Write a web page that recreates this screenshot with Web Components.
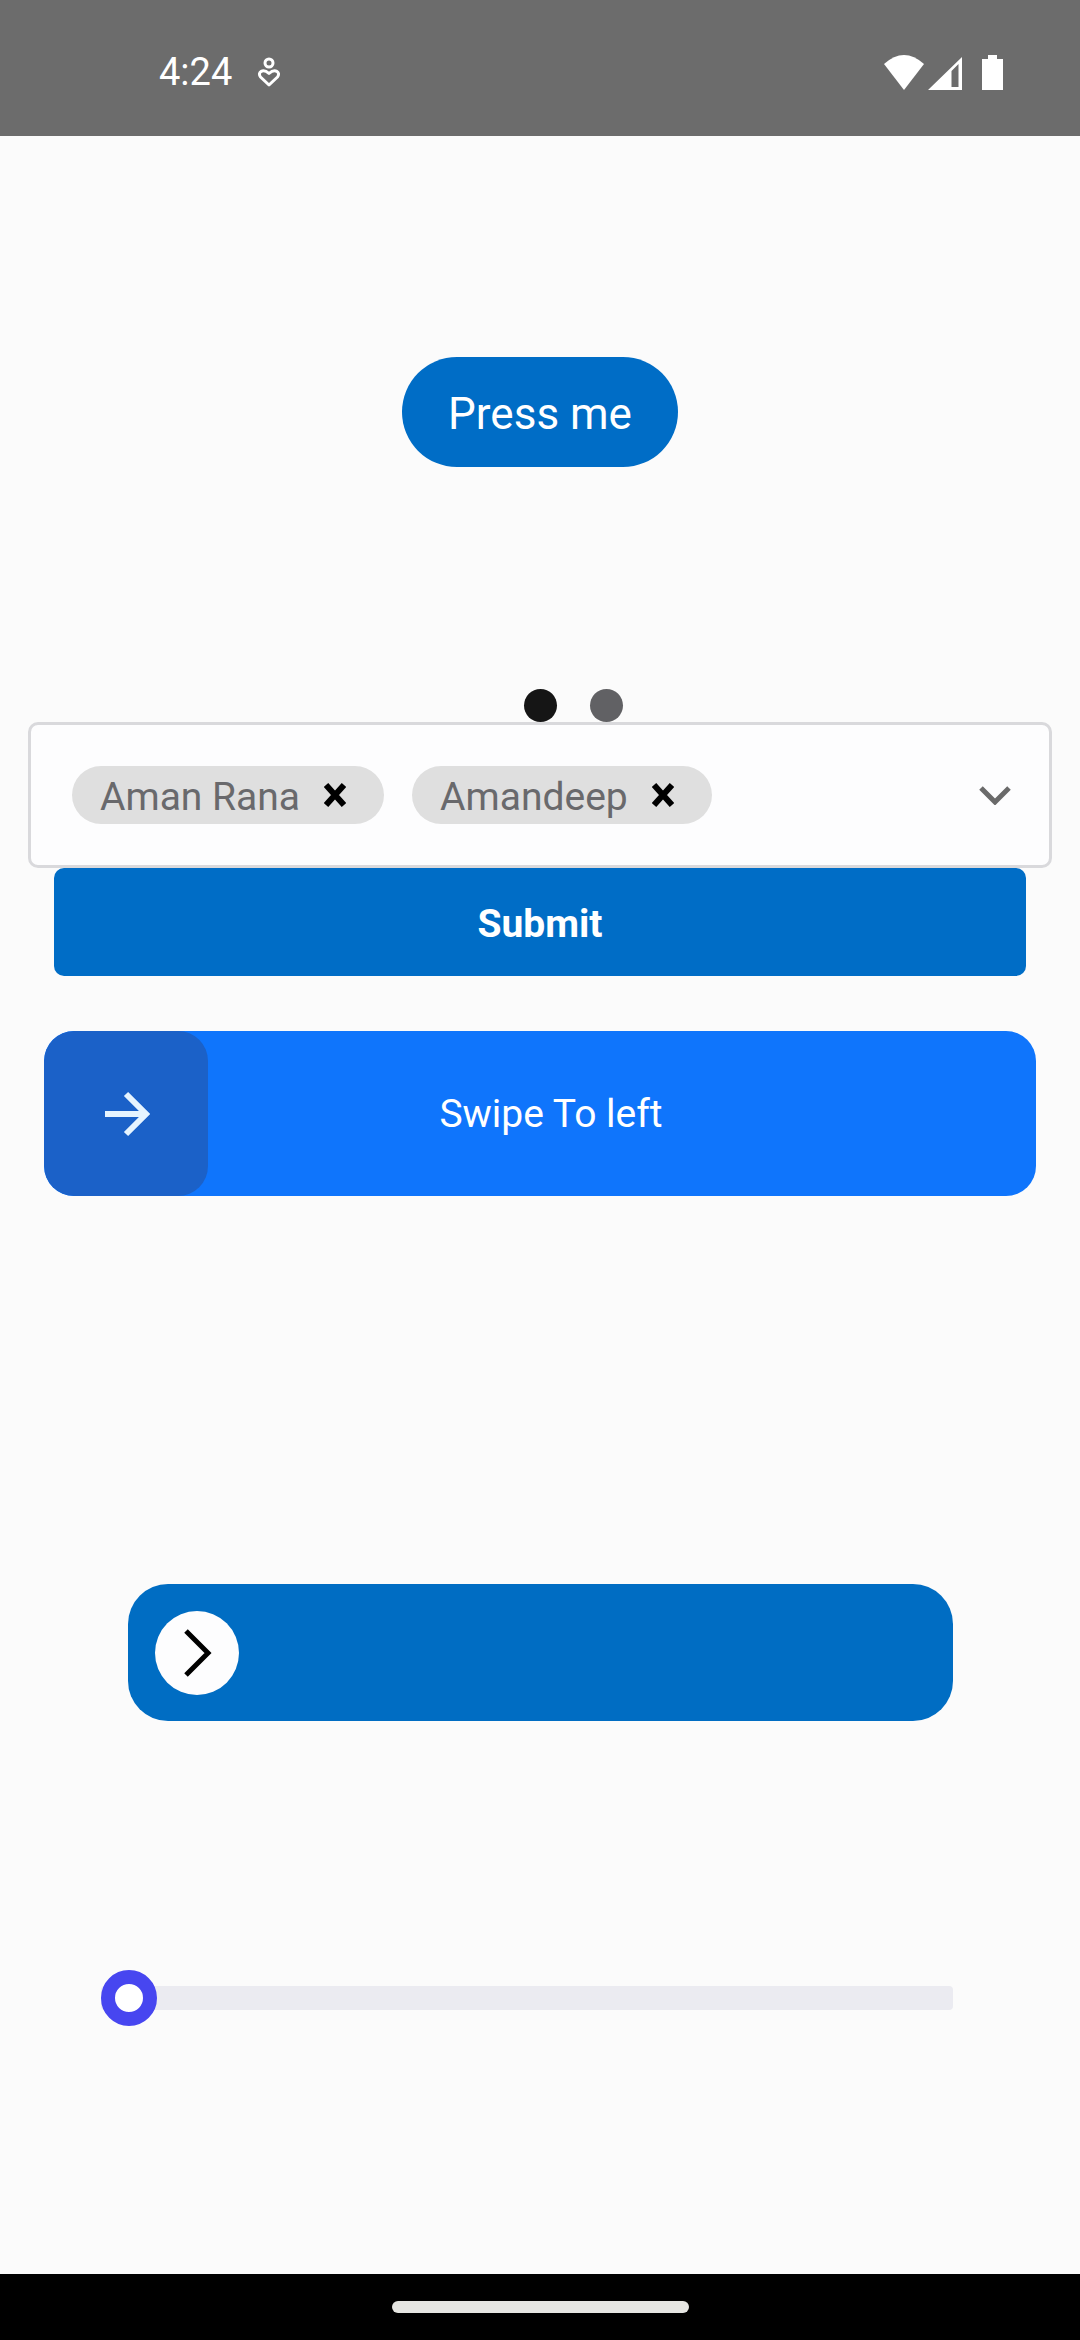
<!DOCTYPE html>
<html lang="en">
<head>
<meta charset="utf-8">
<meta name="viewport" content="width=device-width, initial-scale=1">
<title>Controls demo</title>
<style>
  html, body { margin: 0; }
  body { background: #fbfbfb; font-family: Roboto, "Noto Sans", sans-serif; }
</style>
</head>
<body>
<demo-app></demo-app>
<script>
function define(name, html) {
  customElements.define(name, class extends HTMLElement {
    constructor() {
      super();
      this.attachShadow({ mode: 'open' }).innerHTML =
        '<style>*{box-sizing:border-box}:host{display:block}svg{display:block;fill:none}button{font:inherit;border:0;margin:0;padding:0;cursor:pointer}</style>' + html;
    }
  });
}

define('status-bar', `
<style>
  :host { display: flex; align-items: center; justify-content: space-between; height: 136px; padding: 8px 76px 0 159px; background: #6c6c6c; color: #fff; }
  .side { display: flex; align-items: center; }
  .left { gap: 25px; }
  time { font-size: 38px; line-height: 44px; }
</style>
<div class="side left">
  <time>4:24</time>
  <svg width="24" height="30" viewBox="0 0 24 30" stroke="#fff" stroke-width="3" stroke-linejoin="round"><circle cx="12" cy="6" r="4"/><path d="M12 28 L3.500 20 C0 15 6 11 12 16.500 C18 11 24 15 20.500 20 Z"/></svg>
</div>
<div class="side">
  <svg width="120" height="38" viewBox="0 0 120 38">
    <path fill="#fff" d="M0 11 Q20 -7 40 11 L20 37 Z"/>
    <path fill="#fff" fill-rule="evenodd" d="M44 37 L78 4 V37 Z M67.500 34 H74.500 V11 L67.500 18 Z"/>
    <path fill="#fff" d="M98 6 h6 v-4 h9 v4 h6 v31 h-21 Z"/>
  </svg>
</div>`);

define('pill-button', `
<style>
  button { height: 110px; padding: 4px 46px 0; border-radius: 55px; background: #006dc6; color: #fff; font-size: 44px; line-height: 52px; }
</style>
<button type="button"><slot></slot></button>`);

define('page-dots', `
<style>
  :host { display: flex; gap: 33px; padding-left: calc(50% - 16px); }
  i { width: 33px; height: 33px; border-radius: 50%; background: #616164; }
  i:first-of-type { background: #151515; }
</style>
<i></i><i></i>`);

define('tag-chip', `
<style>
  :host { display: flex; align-items: center; gap: 24px; height: 58px; padding: 0 38px 0 28px; border-radius: 29px; background: #dfdfdf; color: #69696c; font-size: 39px; line-height: 44px; }
  span { padding-top: 4px; }
  button { display: block; background: none; }
</style>
<span><slot></slot></span>
<button type="button" aria-label="Remove"><svg width="22" height="24" viewBox="0 0 22 24" stroke="#000" stroke-width="6"><path d="M2 2 L20 22 M20 2 L2 22"/></svg></button>`);

define('multi-select', `
<style>
  :host { display: flex; align-items: center; justify-content: space-between; height: 146px; padding: 0 38px 0 41px; border: 3px solid #d9d9dc; border-radius: 10px; background: #fdfdfe; }
  .chips { display: flex; gap: 28px; }
  button { display: block; background: none; }
</style>
<div class="chips"><slot></slot></div>
<button type="button" aria-label="Show options"><svg width="32" height="20" viewBox="0 0 32 20" stroke="#6a6a6a" stroke-width="5"><path d="M2 3 L16 17 L30 3"/></svg></button>`);

define('submit-button', `
<style>
  button { width: 100%; height: 108px; padding-top: 4px; border-radius: 10px; background: #006dc6; color: #fff; font-size: 39px; line-height: 44px; font-weight: 700; }
</style>
<button type="submit"><slot></slot></button>`);

define('swipe-slider', `
<style>
  :host { display: grid; align-items: center; overflow: hidden; height: 165px; border-radius: 30px; background: #0f75fc; color: #fff; font-size: 39px; line-height: 44px; }
  input, label, svg { grid-area: 1 / 1; }
  label { padding-left: 22px; text-align: center; pointer-events: none; }
  svg { margin-left: 60px; pointer-events: none; }
  input { appearance: none; width: 100%; height: 165px; margin: 0; background: none; outline: 0; }
  input::-webkit-slider-thumb { appearance: none; width: 164px; height: 165px; border-radius: 30px; background: #1b61c8; }
</style>
<input id="swipe" type="range" min="0" max="100" value="0">
<label for="swipe"><slot></slot></label>
<svg width="46" height="46" viewBox="0 0 46 46" stroke="#e6f4ff" stroke-width="6"><path d="M1 23 H41 M22 3 L42 23 L22 43"/></svg>`);

define('slide-unlock', `
<style>
  :host { display: grid; align-items: center; height: 137px; padding: 0 27px; border-radius: 40px; background: #006dc3; }
  input, svg { grid-area: 1 / 1; }
  svg { margin-left: 29px; pointer-events: none; }
  input { appearance: none; width: 100%; height: 84px; margin: 0; background: none; outline: 0; }
  input::-webkit-slider-thumb { appearance: none; width: 84px; height: 84px; border-radius: 50%; background: #fdfdfe; }
</style>
<input type="range" min="0" max="100" value="0" aria-label="Slide to unlock">
<svg width="28" height="48" viewBox="0 0 28 48" stroke="#000" stroke-width="5"><path d="M2 2 L24 24 L2 46"/></svg>`);

define('value-slider', `
<style>
  input { display: block; appearance: none; width: 100%; height: 56px; margin: 0; background: none; outline: 0; }
  input::-webkit-slider-runnable-track { height: 24px; border-radius: 4px; background: #ebebf1; }
  input::-webkit-slider-thumb { appearance: none; box-sizing: border-box; width: 56px; height: 56px; margin-top: -16px; border: 14px solid #4746f0; border-radius: 50%; background: #fff; }
</style>
<input type="range" min="0" max="100" value="0" aria-label="Value">`);

define('nav-bar', `
<style>
  :host { display: flex; justify-content: center; height: 66px; padding-top: 27px; background: #000; }
  i { width: 297px; height: 12px; border-radius: 6px; background: #e6e6e2; }
</style>
<i></i>`);

define('demo-app', `
<style>
  :host { display: flex; flex-direction: column; min-height: 100vh; }
  main { flex: 1; display: flex; flex-direction: column; padding-top: 221px; }
  pill-button { align-self: center; margin-bottom: 222px; }
  multi-select { margin: 0 28px; }
  submit-button { margin: 0 54px 55px; }
  swipe-slider { margin: 0 44px 388px; }
  slide-unlock { margin: 0 127px 249px 128px; }
  value-slider { margin: 0 127px 0 101px; }
</style>
<status-bar></status-bar>
<main>
  <pill-button>Press me</pill-button>
  <page-dots></page-dots>
  <multi-select><tag-chip>Aman Rana</tag-chip><tag-chip>Amandeep</tag-chip></multi-select>
  <submit-button>Submit</submit-button>
  <swipe-slider>Swipe To left</swipe-slider>
  <slide-unlock></slide-unlock>
  <value-slider></value-slider>
</main>
<nav-bar></nav-bar>`);
</script>
</body>
</html>
